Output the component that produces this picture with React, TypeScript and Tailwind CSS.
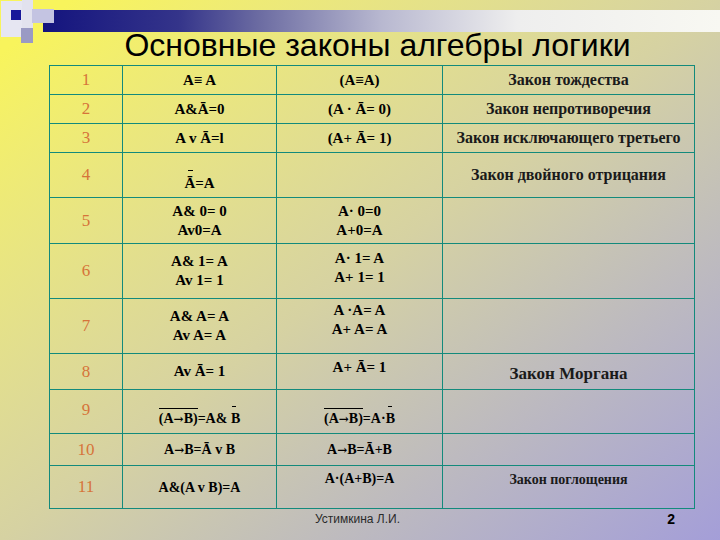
import type { ReactNode } from "react";

const serif = { fontFamily: '"Liberation Serif", "Times New Roman", serif' };

function Bar({ children, className = "" }: { children: ReactNode; className?: string }) {
  // short overline drawn above a group of glyphs
  return (
    <span className="relative inline-block">
      <span className={"absolute left-0 right-0 h-px bg-black " + className} />
      {children}
    </span>
  );
}

function Arrow() {
  return <span style={{ fontFamily: '"DejaVu Serif", serif' }} className="text-[12px]">→</span>;
}

type Row = {
  n: string;
  h: string;
  f1: ReactNode;
  f2: ReactNode;
  law?: ReactNode;
  c1?: string;
  c2?: string;
  c3?: string;
  c4?: string;
};

const rows: Row[] = [
  { n: "1", h: "h-[29px]", f1: "A≡ A", f2: "(A≡A)", law: "Закон тождества" },
  { n: "2", h: "h-[29px]", f1: "A&Ā=0", f2: "(A · Ā= 0)", law: "Закон непротиворечия" },
  { n: "3", h: "h-[29px]", f1: "A v Ā=l", f2: "(A+ Ā= 1)", law: "Закон исключающего третьего" },
  {
    n: "4",
    h: "h-[45px]",
    f1: (
      <>
        <Bar className="-top-[4px] left-[4px] right-[2px]">Ā</Bar>=A
      </>
    ),
    c2: "pt-[16px]",
    f2: "",
    law: "Закон двойного отрицания",
  },
  {
    n: "5",
    h: "h-[46px]",
    f1: (
      <>
        A&amp; 0= 0
        <br />
        Av0=A
      </>
    ),
    f2: (
      <>
        A· 0=0
        <br />
        A+0=A
      </>
    ),
  },
  {
    n: "6",
    h: "h-[55px]",
    f1: (
      <>
        A&amp; 1= A
        <br />
        Av 1= 1
      </>
    ),
    f2: (
      <>
        A· 1= A
        <br />
        A+ 1= 1
      </>
    ),
    c3: "pb-[7px]",
  },
  {
    n: "7",
    h: "h-[55px]",
    f1: (
      <>
        A&amp; A= A
        <br />
        Av A= A
      </>
    ),
    f2: (
      <>
        A ·A= A
        <br />
        A+ A= A
      </>
    ),
    c3: "pb-[12px]",
  },
  {
    n: "8",
    h: "h-[36px]",
    f1: "Av Ā= 1",
    f2: "A+ Ā= 1",
    c3: "pb-[8px]",
    law: <span className="text-[17px] font-semibold">Закон Моргана</span>,
    c4: "pt-[4px]",
  },
  {
    n: "9",
    h: "h-[44px]",
    c1: "pb-[4px]",
    f1: (
      <span className="text-[14px]">
        <Bar className="-top-[1px]">(A<Arrow />B)</Bar>=A&amp; <Bar className="-top-[3px] left-[1px] right-[4px]">B</Bar>
      </span>
    ),
    c2: "pt-[14px]",
    f2: (
      <span className="text-[14px]">
        <Bar className="-top-[1px]">(A<Arrow />B)</Bar>=A·<Bar className="-top-[3px] left-[2px] right-[3px]">B</Bar>
      </span>
    ),
    c3: "pt-[14px]",
  },
  {
    n: "10",
    h: "h-[32px]",
    f1: <span className="text-[14px]">A<Arrow />B=Ā v B</span>,
    f2: <span className="text-[14px]">A<Arrow />B=Ā+B</span>,
  },
  {
    n: "11",
    h: "h-[43px]",
    f1: <span className="text-[14px]">A&amp;(A v B)=A</span>,
    f2: <span className="text-[14px]">A·(A+B)=A</span>,
    c3: "pb-[17px]",
    law: <span className="text-[14px]">Закон поглощения</span>,
    c4: "pb-[17px]",
  },
];

function Decoration() {
  return (
    <svg className="absolute left-0 top-0" width="720" height="46" viewBox="0 0 720 46">
      <defs>
        <linearGradient id="band" x1="0" x2="1" y1="0" y2="0">
          <stop offset="0" stopColor="#14147e" />
          <stop offset="0.2" stopColor="#34348a" />
          <stop offset="0.32" stopColor="#6c6ca2" />
          <stop offset="0.5" stopColor="#b8b8d0" />
          <stop offset="0.7" stopColor="#eeeeee" />
          <stop offset="1" stopColor="#f8f8f2" />
        </linearGradient>
      </defs>
      <rect x="1" y="1" width="21" height="36" fill="#e6e6f2" />
      <rect x="22" y="0" width="11" height="28" fill="#e2e2ee" />
      <rect x="43" y="10" width="677" height="22" fill="url(#band)" />
      <rect x="32" y="9" width="22" height="14" fill="#c4c4e2" />
      <rect x="11" y="10" width="10" height="10" fill="#18189a" />
      <rect x="21" y="28" width="12" height="15" fill="#9a9ac4" />
    </svg>
  );
}

export default function App() {
  return (
    <div className="relative h-[540px] w-[720px] overflow-hidden bg-linear-to-br from-[#f8f45c] from-5% via-[#d6d2a2] via-50% to-[#a49ed8]">
      <Decoration />
      <div className="relative pt-[26px]">
        <h1
          className="h-[39px] pl-[35px] text-center text-[32px] leading-[39px] text-black"
          style={{ fontFamily: '"Liberation Sans", Arial, sans-serif' }}
        >
          Основные законы алгебры логики
        </h1>
        <table
          className="ml-[49px] w-[645px] table-fixed border-collapse border border-[#138a7c] text-center text-black"
          style={serif}
        >
          <colgroup>
            <col className="w-[73px]" />
            <col className="w-[154px]" />
            <col className="w-[166px]" />
            <col className="w-[252px]" />
          </colgroup>
          <tbody>
            {rows.map((r) => (
              <tr key={r.n} className={r.h}>
                <td className={"border border-[#138a7c] p-0 text-[17px] text-[#d6743a] " + (r.c1 ?? "")}>{r.n}</td>
                <td className={"border border-[#138a7c] p-0 text-[15px] font-bold leading-[19px] " + (r.c2 ?? "")}>{r.f1}</td>
                <td className={"border border-[#138a7c] p-0 text-[15px] font-bold leading-[19px] " + (r.c3 ?? "")}>{r.f2}</td>
                <td className={"border border-[#138a7c] p-0 text-[16px] font-bold text-[#1a1a1a] " + (r.c4 ?? "")}>{r.law}</td>
              </tr>
            ))}
          </tbody>
        </table>
        <div
          className="flex h-[20px] items-center pl-[315px] pr-[45px] text-[12px] text-[#2a2a2a]"
          style={{ fontFamily: '"Liberation Sans", Arial, sans-serif' }}
        >
          <span>Устимкина Л.И.</span>
          <span className="ml-auto text-[14px] font-bold text-black">2</span>
        </div>
      </div>
    </div>
  );
}
